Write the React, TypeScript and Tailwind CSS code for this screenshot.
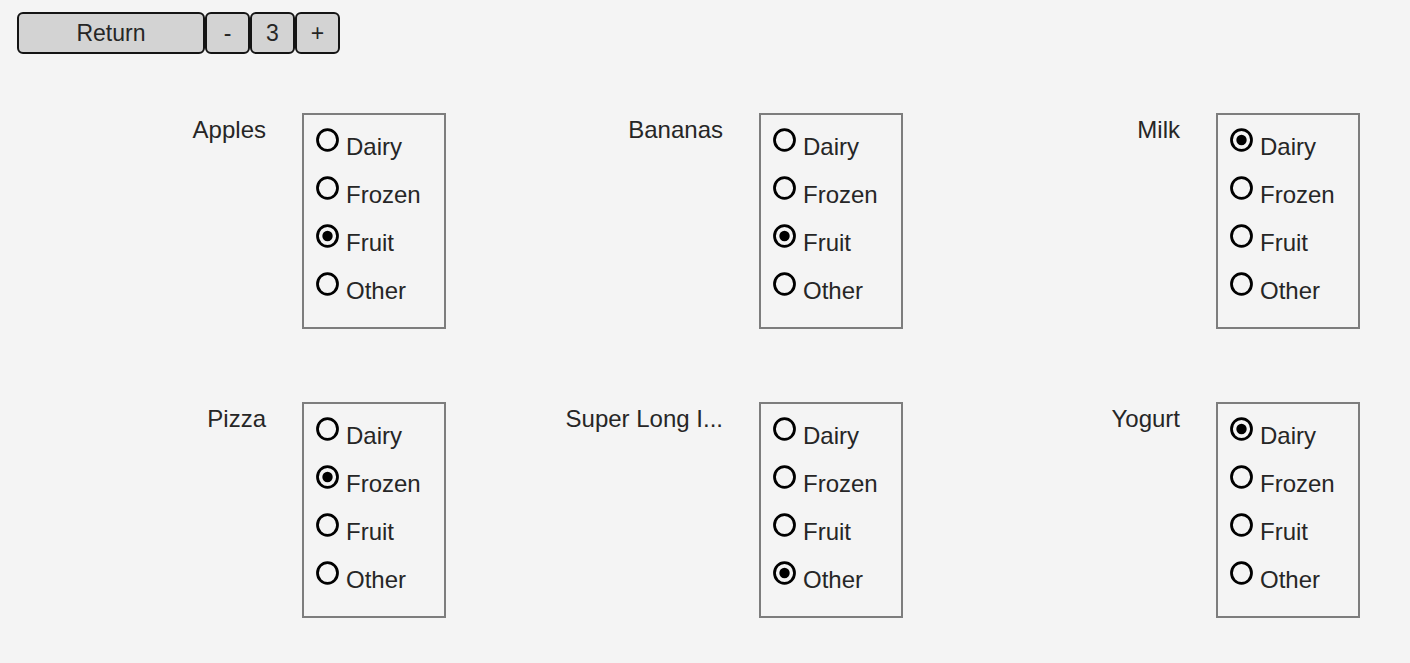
import React from "react";

type Item = { name: string; value: string };

const items: Item[] = [
  { name: "Apples", value: "Fruit" },
  { name: "Bananas", value: "Fruit" },
  { name: "Milk", value: "Dairy" },
  { name: "Pizza", value: "Frozen" },
  { name: "Super Long I...", value: "Other" },
  { name: "Yogurt", value: "Dairy" },
];

const options = ["Dairy", "Frozen", "Fruit", "Other"];

function Radio({ checked }: { checked: boolean }) {
  return (
    <svg width="23" height="24" viewBox="0 0 23 24" className="mt-[12px] shrink-0">
      <ellipse cx="11.5" cy="12" rx="10" ry="10.4" fill="none" stroke="#000" strokeWidth="2.8" />
      {checked && <circle cx="11.5" cy="12" r="5.2" fill="#000" />}
    </svg>
  );
}

function Cell({ item }: { item: Item }) {
  return (
    <div className="flex items-start justify-end pr-[11px]">
      <div className="mr-[36px] pt-[3px] text-right text-[24px] leading-[28px] whitespace-nowrap">
        {item.name}
      </div>
      <div className="w-[144px] h-[216px] border-2 border-[#7d7d7d] pt-[1px] pl-[12px] flex flex-col">
        {options.map((o) => (
          <div key={o} className="flex items-start h-[48px]">
            <Radio checked={o === item.value} />
            <span className="ml-[7px] pt-[17px] text-[24px] leading-[28px]">{o}</span>
          </div>
        ))}
      </div>
    </div>
  );
}

export default function App() {
  const btn =
    "h-[42px] border-2 border-[#141414] rounded-[6px] bg-[#d3d3d3] flex items-center justify-center text-[23px] leading-none";
  return (
    <div className="min-h-screen bg-[#f4f4f4] text-[#262626] font-['Liberation_Sans',Arial,sans-serif]">
      <div className="flex pt-[12px] pl-[17px]">
        <div className={`${btn} w-[188px]`}>Return</div>
        <div className={`${btn} w-[45px]`}>-</div>
        <div className={`${btn} w-[45px]`}>3</div>
        <div className={`${btn} w-[45px]`}>+</div>
      </div>
      <div className="grid grid-cols-[repeat(3,457px)] gap-y-[73px] mt-[59px]">
        {items.map((it) => (
          <Cell key={it.name} item={it} />
        ))}
      </div>
    </div>
  );
}
